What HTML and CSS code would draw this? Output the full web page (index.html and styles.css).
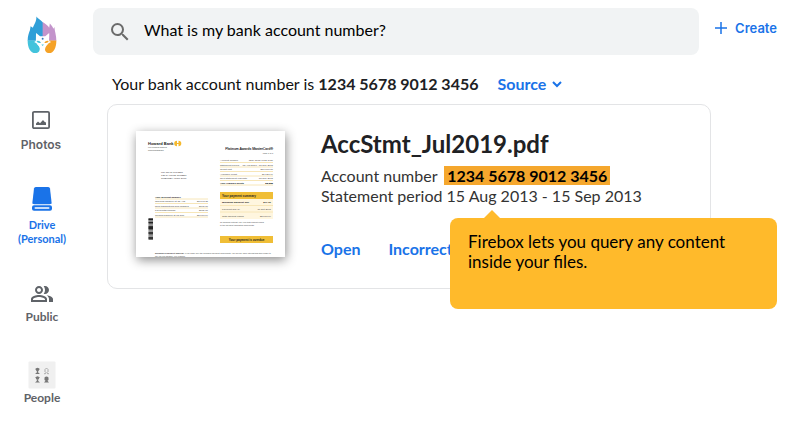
FILE: index.html
```html
<!DOCTYPE html>
<html lang="en">
<head>
<meta charset="utf-8">
<meta name="viewport" content="width=device-width, initial-scale=1">
<title>Firebox</title>
<link rel="stylesheet" href="styles.css">
</head>
<body>
<div class="app">
  <aside class="sidebar">
    <a class="logo" href="#" aria-label="Firebox home">
      <svg width="30" height="38" viewBox="78 47 92 115" aria-hidden="true">
        <path fill="#2f9fd8" d="M107 48C111 54 120 58 127 66V122H80C80 108 84 98 87 90L89 78L96 82C100 72 107 64 107 48Z"/>
        <path fill="#c394cb" d="M126 65C136 72 143 76 146 82L148 69C154 75 157 80 159 85L162 80C163 94 168 106 168 122H126Z"/>
        <path fill="#43c3dc" d="M80 121H106C105 130 116 136 117 145C118 153 113 160 104 160C88 159 80 144 80 121Z"/>
        <path fill="#f5a227" d="M168 121H146C147 130 136 136 134 145C131 152 137 160 146 160C160 159 168 144 168 121Z"/>
        <path fill="#fff" d="M106 98L118 108H134L146 98C147 108 145 116 146 123L152 126L144 130C138 135 132 141 132 146V162H119V146C117 140 110 135 107 130L100 126L105 123C106 114 105 106 106 98Z"/>
        <path fill="#43c3dc" d="M107 123Q116 120 121 128Q111 131 107 123Z"/>
        <path fill="#f5a227" d="M145 123Q136 120 131 128Q141 131 145 123Z"/>
        <circle cx="126" cy="116" r="3" fill="#3678bd"/>
        <path fill="#43c3dc" d="M122 134H130L126 138Z"/>
      </svg>
    </a>
    <nav class="nav" aria-label="Sections">
      <a class="nav-item nav-photos" href="#">
        <svg width="24" height="24" viewBox="0 0 24 24" aria-hidden="true">
          <rect x="3.900" y="3.900" width="16.200" height="16.200" rx="1.200" fill="none" stroke="currentColor" stroke-width="1.800"/>
          <path fill="currentColor" d="M7 17V15.500L9 13.500L11 15.200L14 12L15.500 13.800L17 14.500V17Z"/>
        </svg>
        <span>Photos</span>
      </a>
      <a class="nav-item nav-drive" href="#" aria-current="page">
        <svg width="20" height="24" viewBox="0 0 20 24" aria-hidden="true">
          <path fill="currentColor" d="M3.800 0H16.200Q17.800 0 18 1.600L19.700 16.500Q18.700 17.300 17.500 17.300H2.500Q1.300 17.300 .3 16.500L2 1.600Q2.200 0 3.800 0Z"/>
          <rect y="18.300" width="20" height="5.500" rx="2" fill="currentColor"/>
          <rect x="2.500" y="20.200" width="15" height="1.600" rx=".8" fill="#fff"/>
        </svg>
        <span>Drive<br>(Personal)</span>
      </a>
      <a class="nav-item nav-public" href="#">
        <svg width="24" height="24" viewBox="0 0 24 24" aria-hidden="true">
          <path fill="currentColor" d="M16.670 13.130C18.040 14.060 19 15.320 19 17v3h4v-3c0-2.180-3.570-3.470-6.330-3.870zM15 12c2.210 0 4-1.790 4-4s-1.790-4-4-4c-.47 0-.91.1-1.330.24C14.500 5.270 15 6.580 15 8s-.5 2.730-1.330 3.760c.42.14.86.24 1.330.24zM9 12c2.210 0 4-1.790 4-4s-1.790-4-4-4-4 1.790-4 4 1.790 4 4 4zm0-6c1.100 0 2 .9 2 2s-.9 2-2 2-2-.9-2-2 .9-2 2-2zM9 13c-2.670 0-8 1.340-8 4v3h16v-3c0-2.660-5.330-4-8-4zm6 5H3v-.99C3.200 16.290 6.300 15 9 15s5.800 1.290 6 2v1z"/>
        </svg>
        <span>Public</span>
      </a>
      <a class="nav-item nav-people" href="#">
        <svg width="28" height="28" viewBox="0 0 28 28" aria-hidden="true">
          <rect x=".5" y=".5" width="27" height="27" rx="1" fill="#f0f0f0"/>
          <g fill="#777">
            <circle cx="9.500" cy="8.500" r="1.700"/><path d="M7.500 7.500h4v1h-4zM8.800 10h1.400v1.500l1.800 1.500h-5l1.800-1.500z"/>
            <circle cx="9.500" cy="17" r="1.700"/><path d="M7.500 16h4v1h-4zM8.800 18.500h1.400V20l1.800 1.500h-5L8.800 20z"/>
            <path d="M16.500 16.500q2-2 4 0v2.500l-1 .8 1.500 1.700h-5l1.500-1.700-1-.8z"/>
          </g>
          <path fill="none" stroke="#999" stroke-width=".8" d="M17 11V8.500Q18.500 5.500 20 8.500V11M16 12.700h1.500l.5-1.500M21 12.700h-1.500l-.5-1.500"/>
        </svg>
        <span>People</span>
      </a>
    </nav>
  </aside>

  <div class="content">
    <header class="topbar">
      <form class="search" role="search">
        <label class="search-label" for="query" aria-label="Search">
          <svg width="24" height="24" viewBox="0 0 24 24" aria-hidden="true">
            <path fill="currentColor" d="M15.500 14h-.79l-.28-.27A6.471 6.471 0 0 0 16 9.500 6.500 6.500 0 1 0 9.500 16c1.610 0 3.090-.59 4.230-1.570l.27.28v.79l5 4.990L20.490 19l-4.990-5zm-6 0C7.010 14 5 11.990 5 9.500S7.010 5 9.500 5 14 7.010 14 9.500 11.990 14 9.500 14z"/>
          </svg>
        </label>
        <input id="query" class="search-input" type="text" value="What is my bank account number?">
      </form>
      <button class="create" type="button">
        <svg width="12" height="12" viewBox="0 0 12 12" aria-hidden="true"><path d="M6 0V12M0 6H12" stroke="currentColor" stroke-width="1.500"/></svg>
        <span>Create</span>
      </button>
    </header>

    <main class="results">
      <div class="answer">
        <p class="answer-text">Your bank account number is <strong>1234 5678 9012 3456</strong></p>
        <button class="source" type="button">
          <span>Source</span>
          <svg width="10" height="7" viewBox="0 0 10 7" aria-hidden="true"><path d="M1 1L5 5L9 1" fill="none" stroke="currentColor" stroke-width="2"/></svg>
        </button>
      </div>

      <article class="card">
        <svg class="thumb" width="149" height="126" viewBox="0 0 149 126" role="img" aria-label="Statement preview">
          <rect width="149" height="126" fill="#fff"/>
          <g class="doc">
            <text class="doc-brand" x="12" y="14">Howard Bank</text>
            <text class="doc-fine" x="12" y="17">For personal banking</text>
            <text class="doc-fine" x="12" y="20">www.howardbank</text>
            <path fill="#f5b92e" d="M41 9.700V15.300A2.800 2.800 0 0 1 41 9.700ZM42.500 9.700V15.300A2.800 2.800 0 0 0 42.500 9.700ZM41 12h1.500v1h-1.500z"/>
            <text class="doc-head" x="137" y="18.500" text-anchor="end">Platinum Awards MasterCard®</text>
            <text class="doc-fine" x="137" y="22.500" text-anchor="end">Page 1 of 3</text>
            <g class="doc-address"><text x="25" y="42">MR JOHN CITIZEN</text><text x="25" y="45">123 SAMPLE STREET</text><text x="25" y="48">SUBURBIA NSW 2000</text></g>
            <path class="doc-rule" d="M84 31.500h53M84 36h53M84 40.500h53M84 45h53M84 49.500h53M84 54h53M19 68h53M19 72.500h53M19 77h53M19 81.500h53M19 86h53"/>
            <g class="doc-row"><text x="84" y="30">Account number</text><text x="84" y="34.500">Statement period</text><text x="84" y="39">Credit limit</text><text x="84" y="43.500">Available credit</text><text x="84" y="48">Next statement end date</text></g>
            <g class="doc-row" text-anchor="end"><text x="137" y="30">1234 5678 9012 3456</text><text x="137" y="34.500">15 Aug 2013 - 15 Sep 2013</text><text x="137" y="39">$10,000.00</text><text x="137" y="43.500">$1,127.99</text><text x="137" y="48">15 Sep 2013</text></g>
            <text class="doc-bold" x="84" y="52.500">Your rewards points</text><text class="doc-bold" x="137" y="52.500" text-anchor="end">88,888</text>
            <text class="doc-bold" x="19" y="66.500">Your account balance</text>
            <g class="doc-row"><text x="19" y="71">Opening balance at 15 Aug</text><text x="19" y="75.500">New transactions and charges</text><text x="19" y="80">Payments/refunds</text><text x="19" y="84.500">Closing balance at 15 Sep</text></g>
            <g class="doc-row" text-anchor="end"><text x="72" y="71">$3,098.35</text><text x="72" y="75.500">$798.00</text><text x="72" y="80">$165.00</text><text x="72" y="84.500">$8,670.04</text></g>
            <path fill="#fff6df" d="M84 61h53v27H84z"/><path fill="#f0be36" d="M84 61h53v7H84zM84 105h53v7H84z"/>
            <path class="doc-rule" d="M84 74.500h53M84 81h53"/>
            <text class="doc-title" x="86" y="65.700">Your payment summary</text>
            <text class="doc-bold" x="86" y="72.300">Minimum payment due</text><text class="doc-bold" x="135" y="72.300" text-anchor="end">$77.00</text>
            <g class="doc-row"><text x="86" y="79">Payment due by</text><text x="86" y="85.500">Total amount owing</text></g>
            <g class="doc-row" text-anchor="end"><text x="135" y="79">10 Oct 2013</text><text x="135" y="85.500">$8,670.04</text></g>
            <text class="doc-fine" x="84" y="92">To minimise interest, pay your total amount owing</text><text class="doc-fine" x="84" y="94.500">or the payment calculated each month.</text>
            <text class="doc-title" x="110.500" y="109.700" text-anchor="middle">Your payment is overdue</text>
            <path fill="#777" d="M12.500 87h4.500v22h-4.500z"/><path stroke="#222" stroke-width="1.300" d="M12.500 88.500h4.500M12.500 91.500h4.500M12.500 96h4.500M12.500 97.500h4.500M12.500 102h4.500M12.500 107h4.500"/><path stroke="#ddd" stroke-width=".6" d="M12.500 90h4.500M12.500 94h4.500M12.500 100h4.500M12.500 105h4.500"/>
            <text class="doc-fine" x="19" y="123.300"><tspan font-weight="700">Minimum Repayment Warning:</tspan> If you make only the minimum payment each month, you will pay more interest and take longer to</text>
            <text class="doc-fine" x="19" y="126">pay off your balance. For example</text>
          </g>
        </svg>
        <div class="details">
          <h1 class="file-name">AccStmt_Jul2019.pdf</h1>
          <p class="line">Account number <mark class="match">1234 5678 9012 3456</mark></p>
          <p class="line">Statement period 15 Aug 2013 - 15 Sep 2013</p>
          <div class="actions">
            <button type="button">Open</button>
            <button type="button">Incorrect</button>
          </div>
        </div>
        <div class="tooltip" role="tooltip">Firebox lets you query any content inside your files.</div>
      </article>
    </main>
  </div>
</div>
</body>
</html>
```

FILE: styles.css
```css
* { box-sizing: border-box; }
body { margin: 0; background: #fff; color: #202124; font-family: Lato, "Liberation Sans", sans-serif; font-size: 16px; line-height: 20px; }
h1, p { margin: 0; }
a { color: inherit; text-decoration: none; }
svg { display: block; flex: none; }
button { padding: 0; border: 0; background: none; color: #1a73e8; font: inherit; font-weight: 700; cursor: pointer; }

.app { display: grid; grid-template-columns: 84px minmax(0, 1fr); }
.sidebar { padding-top: 16px; color: #5f6368; }
.logo { display: flex; justify-content: center; }
.nav { display: flex; flex-direction: column; padding-top: 54px; }
.nav-item { display: flex; flex-direction: column; align-items: center; text-align: center; font-size: 12px; font-weight: 700; line-height: 14px; }
.nav-photos { gap: 6px; padding-right: 2px; font-family: Inter, sans-serif; font-weight: 600; }
.nav-drive { gap: 7px; padding-top: 35px; color: #1a73e8; font-size: 11px; }
.nav-public { gap: 4px; padding-top: 36px; }
.nav-people { gap: 2px; padding-top: 37px; }

.content { padding: 8px 23px 24px 9px; }
.topbar { display: flex; align-items: flex-start; gap: 16px; }
.search { display: flex; flex: 1; align-items: center; gap: 12px; padding: 0 15px; border-radius: 8px; background: #f1f3f4; }
.search-label { color: #6b6b6b; }
.search-input { flex: 1; min-width: 0; height: 47px; padding: 0 0 4px; border: 0; outline: 0; background: none; color: #000; font: inherit; }
.create { display: flex; align-items: center; gap: 8px; padding-top: 10px; font-family: Inter, sans-serif; font-size: 13px; font-weight: 600; }

.results { padding: 19px 66px 0 14px; }
.answer { display: flex; align-items: center; gap: 19px; padding-left: 5px; }
.answer-text { color: #111; }
.answer strong { color: #202124; }
.source { display: flex; align-items: center; gap: 6px; }

.card { position: relative; display: flex; gap: 36px; margin-top: 10px; padding: 26px 28px 28px; border: 1px solid #e3e4e6; border-radius: 10px; }
.thumb { margin-bottom: 3px; box-shadow: 1px 3px 10px rgb(0 0 0 / 45%); }
.doc { font-family: "Liberation Sans", sans-serif; fill: #444; }
.doc-brand { font-size: 4px; font-weight: 700; fill: #222; }
.doc-head { font-size: 3.5px; fill: #222; stroke: #222; stroke-width: .1px; }
.doc-fine { font-size: 2px; }
.doc-row, .doc-address { font-size: 2.5px; }
.doc-bold { font-size: 2.5px; font-weight: 700; fill: #222; }
.doc-title { font-size: 3px; font-weight: 700; fill: #222; }
.doc-rule { fill: none; stroke: #f7e6b8; stroke-width: 1px; }

.file-name { font-size: 24px; line-height: 26px; }
.line { color: #333; }
.file-name + .line { margin-top: 9px; }
.match { margin-left: 3px; padding: 0 3px; background: #f5a72d; color: #000; font-weight: 700; }
.actions { display: flex; gap: 28px; margin-top: 33px; }
.tooltip { position: absolute; top: 113px; left: 342px; width: 327px; min-height: 91px; padding: 14px 40px 14px 18px; border-radius: 8px; background: #ffba2b; color: #000; font-size: 17px; }
.tooltip::before { content: ""; position: absolute; bottom: 100%; left: 34px; border: 8px solid transparent; border-top: 0; border-bottom-color: #ffba2b; }
```
